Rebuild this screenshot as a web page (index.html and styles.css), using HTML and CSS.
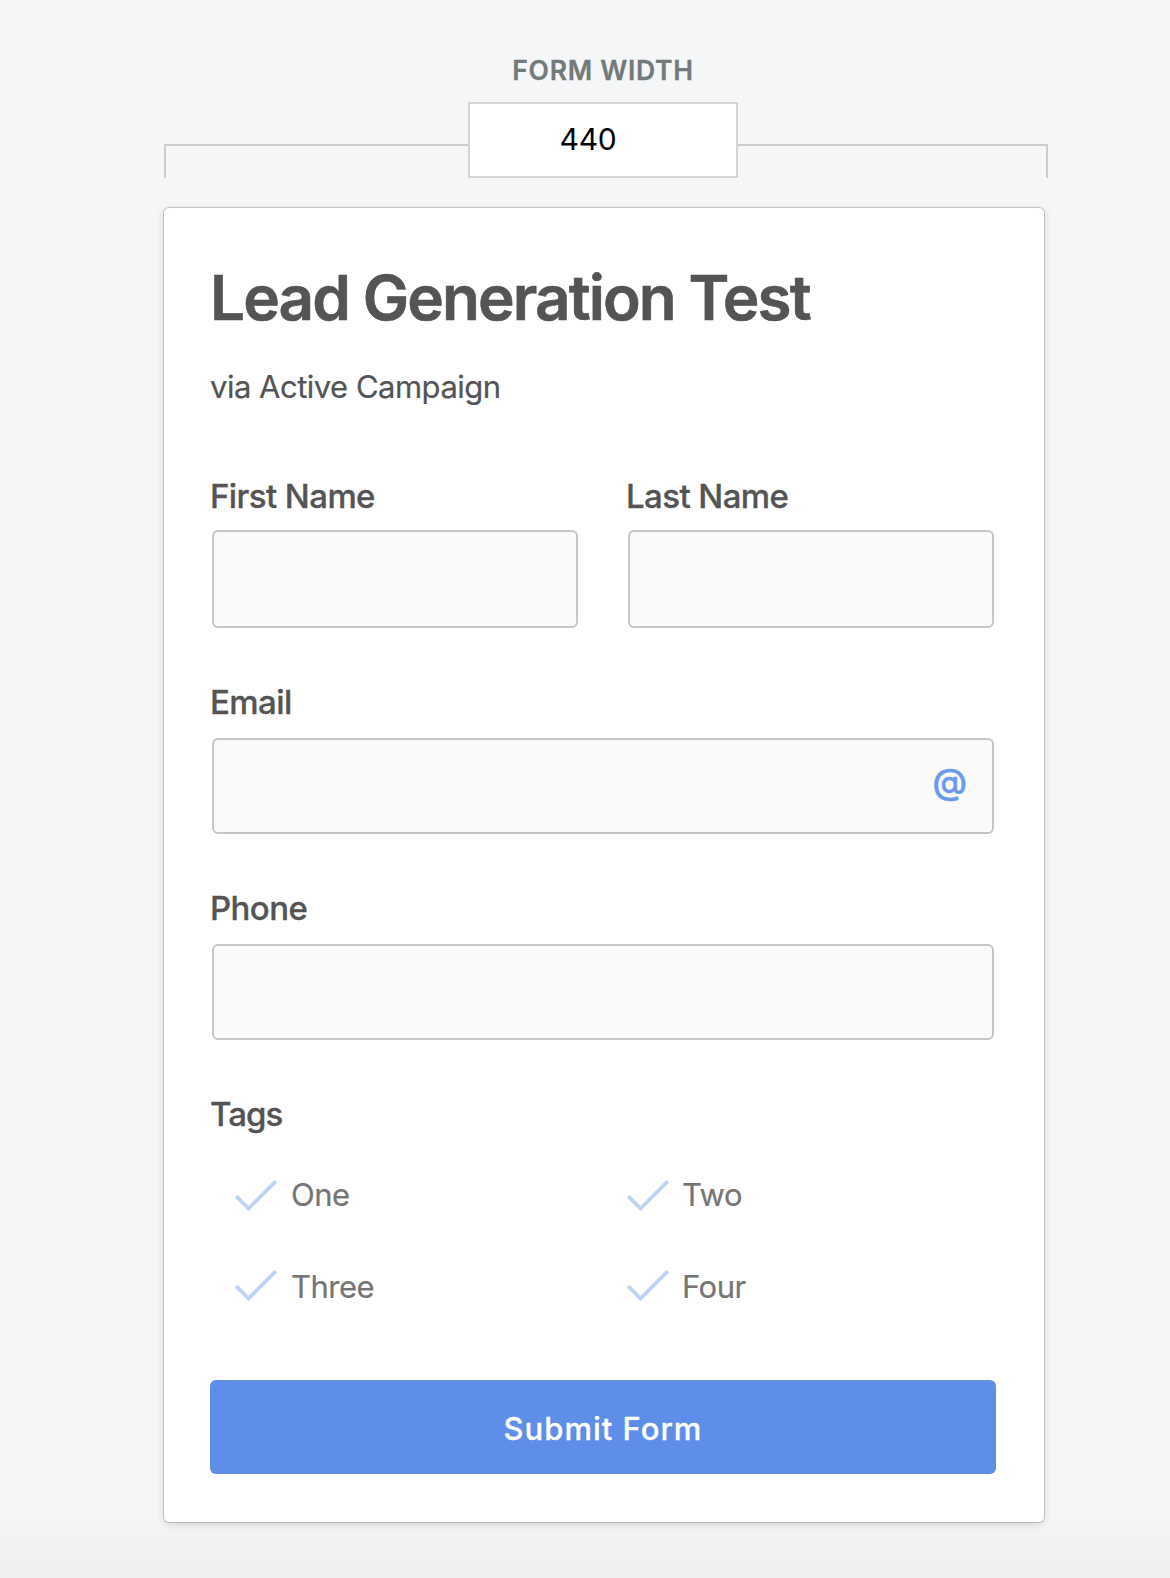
FILE: index.html
```html
<!DOCTYPE html>
<html lang="en">
<head>
    <meta charset="UTF-8">
    <title>Lead Generation Test</title>
    <link rel="stylesheet" href="styles.css">
</head>
<body>

<div class="width_holder">
    <label class="width_label" for="form_width">FORM WIDTH</label>
    <div class="width_row">
        <div class="line line_left"></div>
        <input class="width_input" id="form_width" type="text" value="440">
        <div class="line line_right"></div>
    </div>
</div>

<form class="form">
    <h1 class="title">Lead Generation Test</h1>
    <p class="text">via Active Campaign</p>

    <div class="row">
        <div class="field">
            <label class="label" for="first">First Name</label>
            <input class="input tall" id="first" type="text">
        </div>
        <div class="field">
            <label class="label" for="last">Last Name</label>
            <input class="input tall" id="last" type="text">
        </div>
    </div>

    <div class="field">
        <label class="label">Email</label>
        <div class="input input_email"><span class="at">@</span></div>
    </div>

    <div class="field">
        <label class="label" for="phone">Phone</label>
        <input class="input" id="phone" type="text">
    </div>

    <div class="field">
        <div class="label tags_label">Tags</div>
        <div class="tags">
            <div class="tag">
                <svg class="check" width="42" height="31" viewBox="0 0 42 31"><path d="M1.2 16.2 L13.5 28.5 L40.8 1.2"/></svg>
                <span>One</span>
            </div>
            <div class="tag">
                <svg class="check" width="42" height="31" viewBox="0 0 42 31"><path d="M1.2 16.2 L13.5 28.5 L40.8 1.2"/></svg>
                <span>Two</span>
            </div>
            <div class="tag tag_second">
                <svg class="check" width="42" height="31" viewBox="0 0 42 31"><path d="M1.2 16.2 L13.5 28.5 L40.8 1.2"/></svg>
                <span>Three</span>
            </div>
            <div class="tag tag_second">
                <svg class="check" width="42" height="31" viewBox="0 0 42 31"><path d="M1.2 16.2 L13.5 28.5 L40.8 1.2"/></svg>
                <span>Four</span>
            </div>
        </div>
    </div>

    <button class="submit" type="button">Submit Form</button>
</form>

</body>
</html>
```
FILE: styles.css
```css
* {
    box-sizing: border-box;
}
body {
    margin: 0;
    height: 1578px;
    overflow: hidden;
    font-family: Inter, "Liberation Sans", sans-serif;
    color: #545454;
    background: linear-gradient(#f4f6f8 1510px, #eeeff1 1578px);
}

/* width control above the form */
.width_holder {
    width: 884px;
    margin-left: 164px;
    padding-top: 53px;
}
.width_label {
    display: block;
    width: 270px;
    margin-left: 304px;
    line-height: 34px;
    font-size: 26.5px;
    font-weight: 600;
    letter-spacing: 0.7px;
    text-align: center;
    color: #737a7a;
    -webkit-text-stroke: 0.3px #737a7a;
}
.width_row {
    display: flex;
    align-items: flex-end;
    margin-top: 15px;
}
.line {
    height: 34px;
    border-top: 2px solid #cccdce;
}
.line_left {
    width: 304px;
    border-left: 2px solid #cccdce;
}
.line_right {
    flex: 1;
    border-right: 2px solid #cccdce;
}
.width_input {
    width: 270px;
    height: 76px;
    padding: 0 30px 2px 0;
    border: 2px solid #d4d4d4;
    background: #fff;
    color: #000;
    font-family: inherit;
    font-size: 30px;
    letter-spacing: -0.3px;
    text-align: center;
}

/* form card */
.form {
    width: 880px;
    height: 1314px;
    margin: 30px 0 0 164px;
    padding: 52px 48px 0 46px;
    background: #fff;
    border-radius: 5px;
    box-shadow: 0 0 0 1px rgba(0, 0, 0, 0.17), 0 2px 9px rgba(0, 0, 0, 0.15);
}
.title {
    margin: 0 0 32px;
    line-height: 76px;
    font-size: 62px;
    font-weight: 600;
    letter-spacing: -1.9px;
    white-space: nowrap;
    -webkit-text-stroke: 0.6px #545454;
}
.text {
    margin: 0 0 70px;
    line-height: 38px;
    font-size: 31px;
    letter-spacing: -0.5px;
    -webkit-text-stroke: 0.2px #545454;
}
.row {
    display: flex;
    gap: 48px;
}
.row .field {
    width: 368px;
}
.field {
    margin-bottom: 54px;
}
.label {
    display: block;
    margin-bottom: 16px;
    line-height: 40px;
    font-size: 33px;
    font-weight: 500;
    letter-spacing: -0.58px;
    -webkit-text-stroke: 0.3px #545454;
}
.row .label {
    margin-bottom: 14px;
}
.input {
    display: block;
    width: 782px;
    height: 96px;
    margin-left: 2px;
    border: 2px solid #c6c6c6;
    border-radius: 6px;
    background: #fafafa;
}
.tall {
    height: 98px;
}
.row .input {
    width: 366px;
}
.input_email {
    display: flex;
    justify-content: flex-end;
    padding: 21px 25px 0 0;
}
.at {
    line-height: 40px;
    font-size: 35px;
    font-weight: 500;
    color: #6b9aed;
    -webkit-text-stroke: 0.5px #6b9aed;
}
.tags_label {
    margin-bottom: 42px;
    letter-spacing: -0.9px;
}
.tags {
    display: grid;
    grid-template-columns: 392px 1fr;
    row-gap: 54px;
    padding-left: 25px;
    margin-bottom: 74px;
}
.tag {
    display: flex;
    gap: 14px;
    height: 38px;
    line-height: 38px;
    font-size: 31px;
    letter-spacing: -0.5px;
    color: #757575;
    -webkit-text-stroke: 0.2px #757575;
}
.tag:nth-child(even) {
    gap: 13px;
}
.check {
    margin-top: 4px;
    fill: none;
    stroke: #bfd3f7;
    stroke-width: 3.8;
}
.tag_second .check {
    margin-top: 2px;
}
.submit {
    display: block;
    width: 786px;
    height: 94px;
    padding: 2px 0 0;
    border: 0;
    border-radius: 6px;
    background: #5e8ee8;
    color: #fff;
    font-family: inherit;
    font-size: 31px;
    font-weight: 500;
    letter-spacing: 1px;
    -webkit-text-stroke: 0.3px #fff;
}
```
